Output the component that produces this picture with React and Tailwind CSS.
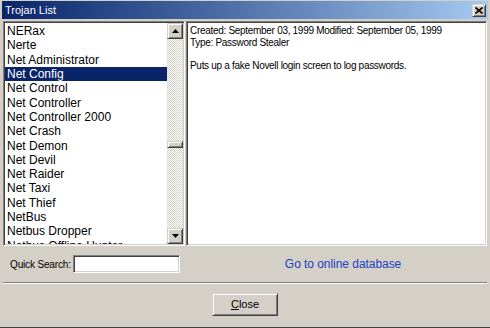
import { useState } from 'react';

const TROJANS = [
  'NERax',
  'Nerte',
  'Net Administrator',
  'Net Config',
  'Net Control',
  'Net Controller',
  'Net Controller 2000',
  'Net Crash',
  'Net Demon',
  'Net Devil',
  'Net Raider',
  'Net Taxi',
  'Net Thief',
  'NetBus',
  'Netbus Dropper',
  'Netbus Offline Hunter',
];

const raised =
  'border border-t-[#d4d0c8] border-l-[#d4d0c8] border-r-[#404040] border-b-[#404040] shadow-[inset_1px_1px_0_#ffffff,inset_-1px_-1px_0_#808080] bg-[#d4d0c8]';
const sunken =
  'border border-t-[#808080] border-l-[#808080] border-r-white border-b-white shadow-[inset_1px_1px_0_#404040,inset_-1px_-1px_0_#d4d0c8]';

function Arrow({ down }) {
  return (
    <svg width="7" height="4" viewBox="0 0 7 4" className={down ? 'rotate-180' : ''}>
      <path d="M3.5 0 L7 4 L0 4 Z" fill="#000" />
    </svg>
  );
}

export default function App() {
  const [selected, setSelected] = useState('Net Config');
  const [query, setQuery] = useState('');

  return (
    <div className="w-[490px] h-[328px] bg-[#d4d0c8] flex flex-col border-b border-[#404040] overflow-hidden font-['Liberation_Sans',Arial,sans-serif] text-black">
      {/* title bar */}
      <div className="mt-[1px] mx-[2px] h-[18px] flex items-center justify-between bg-gradient-to-r from-[#0a246a] to-[#a6caf0] pl-[3px] pr-[2px]">
        <span className="text-white text-[11px] leading-none">Trojan List</span>
        <button className={`${raised} w-[14px] h-[13px] flex items-center justify-center`}>
          <svg width="8" height="7" viewBox="0 0 8 7">
            <path d="M0.5 0.5 L7.5 6.5 M7.5 0.5 L0.5 6.5" stroke="#000" strokeWidth="1.6" />
          </svg>
        </button>
      </div>

      {/* list + details */}
      <div className="mt-[2px] mx-[3px] h-[225px] flex">
        <div className={`${sunken} w-[182px] flex bg-white p-[1px]`}>
          <ul className="flex-1 overflow-hidden pt-[1px]">
            {TROJANS.map((name) => (
              <li
                key={name}
                onClick={() => setSelected(name)}
                className={`h-[14.3px] flex items-center pl-[2px] text-[12px] leading-none whitespace-nowrap cursor-default ${
                  selected === name ? 'bg-[#0a246a] text-white' : ''
                }`}
              >
                {name}
              </li>
            ))}
          </ul>
          <div className="w-[16px] flex flex-col">
            <div className={`${raised} h-[16px] flex items-center justify-center`}>
              <Arrow />
            </div>
            <div className="flex-1 bg-[repeating-conic-gradient(#ffffff_0_25%,#d4d0c8_0_50%)] bg-[length:2px_2px]">
              <div className={`${raised} mt-[102px] h-[7px]`} />
            </div>
            <div className={`${raised} h-[16px] flex items-center justify-center`}>
              <Arrow down />
            </div>
          </div>
        </div>

        <div className={`${sunken} flex-1 ml-[1px] bg-white pl-[3px] pt-[3px] text-[10px] leading-[11.5px] tracking-[-0.3px]`}>
          <p>Created: September 03, 1999 Modified: September 05, 1999</p>
          <p>Type: Password Stealer</p>
          <p className="mt-[11.5px]">Puts up a fake Novell login screen to log passwords.</p>
        </div>
      </div>

      {/* search row */}
      <div className="h-[36px] flex items-center">
        <span className="ml-[10px] text-[10px] tracking-[-0.15px]">Quick Search:</span>
        <input
          value={query}
          onChange={(e) => setQuery(e.target.value)}
          className={`${sunken} ml-[2px] w-[107px] h-[18px] bg-white text-[11px] px-[2px] outline-none`}
        />
        <a href="#" className="ml-[105px] text-[12px] tracking-[-0.05px] text-[#2040c0]">
          Go to online database
        </a>
      </div>

      <div className="mx-[3px] border-t border-[#808080] border-b border-b-white" />

      {/* footer */}
      <div className="flex-1 flex justify-center pt-[9px]">
        <button className={`${raised} w-[66px] h-[23px] text-[11px] flex items-center justify-center`}>
          <span>
            <span className="underline">C</span>lose
          </span>
        </button>
      </div>
    </div>
  );
}
